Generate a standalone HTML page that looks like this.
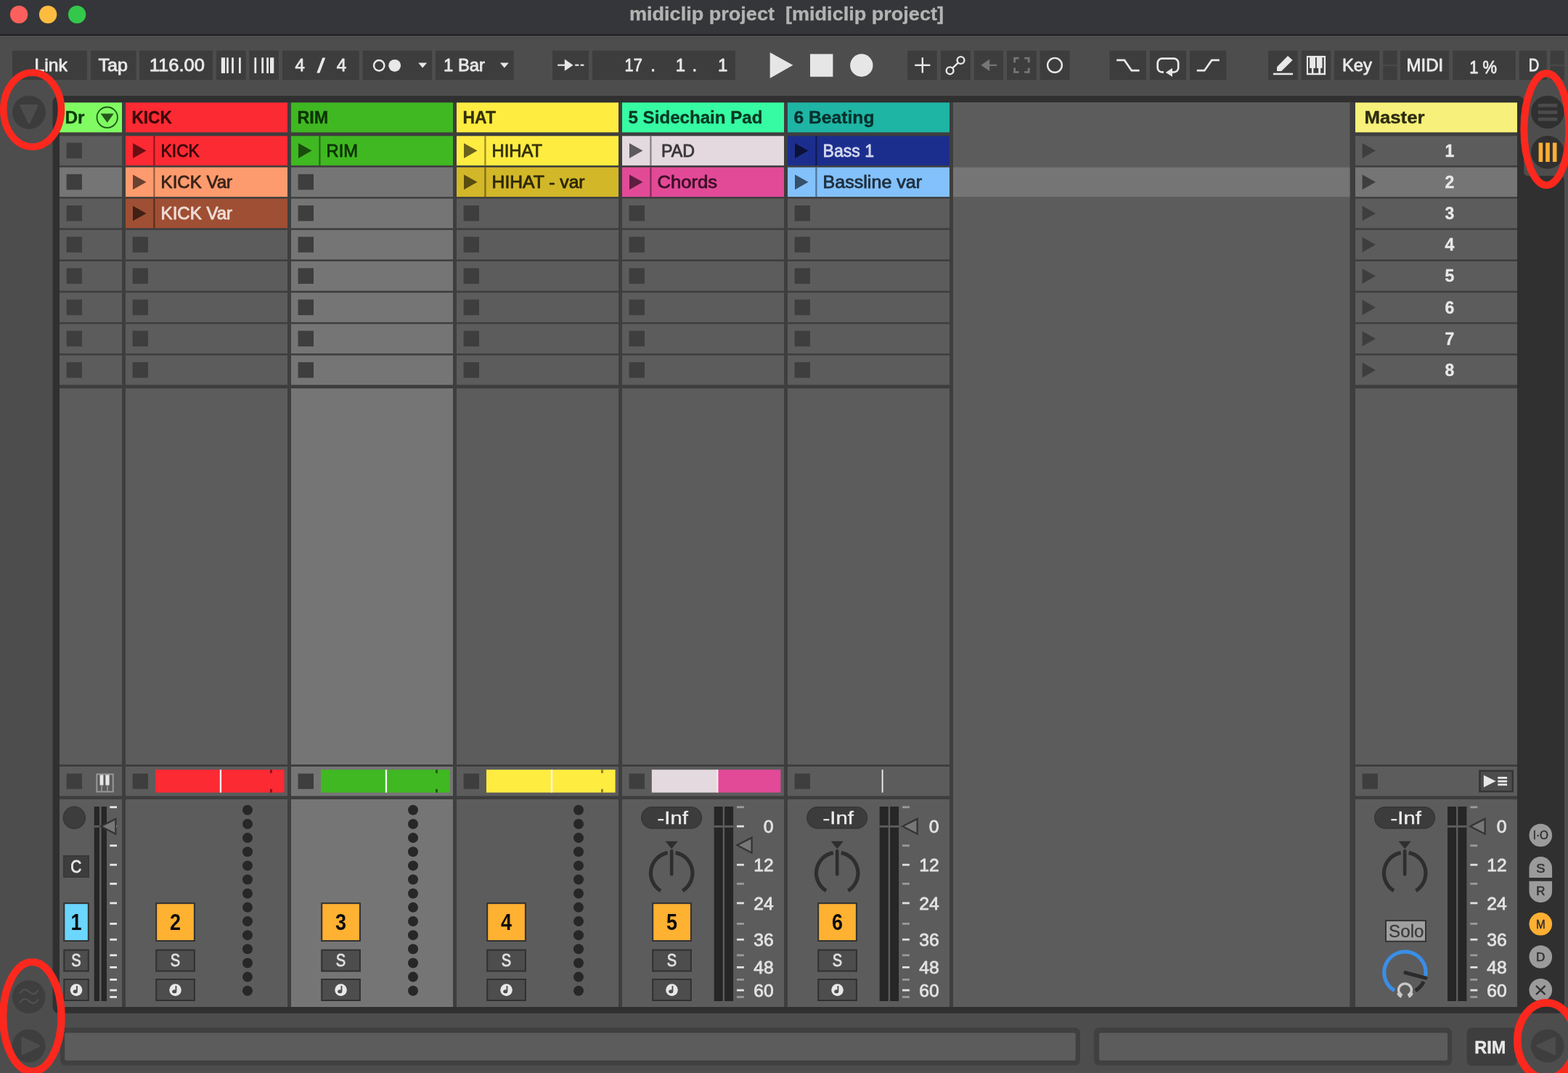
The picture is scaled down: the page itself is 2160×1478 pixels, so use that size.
<!DOCTYPE html>
<html lang="en"><head><meta charset="utf-8"><title>midiclip project  [midiclip project]</title>
<style>
html,body{margin:0;padding:0;background:#4d4d4d;}
body{width:2160px;height:1478px;overflow:hidden;}
svg{display:block;font-family:"Liberation Sans",sans-serif;will-change:transform;}
text{white-space:pre;}
</style></head><body>
<svg width="2160" height="1478" viewBox="0 0 2160 1478" shape-rendering="auto">
<rect width="2160" height="1478" fill="#4d4d4d"/>
<g id="titlebar">
<rect x="0" y="0" width="2160" height="47.8" fill="#353639"/>
<rect x="0" y="47.6" width="2160" height="1.4" fill="#141414"/>
<circle cx="26.1" cy="20" r="12.2" fill="#fd605c"/>
<circle cx="66.1" cy="20" r="12.2" fill="#fdbc40"/>
<circle cx="106.1" cy="20" r="12.2" fill="#33c74c"/>
<text x="1083.5" y="27.8" font-size="26" fill="#b3b3b3" font-weight="bold" text-anchor="middle" textLength="433" lengthAdjust="spacingAndGlyphs" stroke="#b3b3b3" stroke-width="0.35" stroke-linejoin="round">midiclip project  [midiclip project]</text>
</g>
<g id="toolbar">
<rect x="17" y="69.7" width="103" height="40.3" fill="#3d3d3d"/>
<rect x="125" y="69.7" width="62.5" height="40.3" fill="#3d3d3d"/>
<rect x="192" y="69.7" width="101" height="40.3" fill="#3d3d3d"/>
<rect x="298" y="69.7" width="40.8" height="40.3" fill="#3d3d3d"/>
<rect x="343.4" y="69.7" width="40.6" height="40.3" fill="#3d3d3d"/>
<rect x="389" y="69.7" width="105.7" height="40.3" fill="#3d3d3d"/>
<rect x="499.5" y="69.7" width="95.5" height="40.3" fill="#3d3d3d"/>
<rect x="600" y="69.7" width="107.7" height="40.3" fill="#3d3d3d"/>
<rect x="761" y="69.7" width="50" height="40.3" fill="#3d3d3d"/>
<rect x="816" y="69.7" width="197" height="40.3" fill="#3d3d3d"/>
<rect x="1250.2" y="69.7" width="40.5" height="40.3" fill="#3d3d3d"/>
<rect x="1296" y="69.7" width="40.9" height="40.3" fill="#3d3d3d"/>
<rect x="1341.8" y="69.7" width="40.2" height="40.3" fill="#3d3d3d"/>
<rect x="1387" y="69.7" width="40.8" height="40.3" fill="#3d3d3d"/>
<rect x="1432.7" y="69.7" width="40.9" height="40.3" fill="#3d3d3d"/>
<rect x="1528.5" y="69.7" width="50.5" height="40.3" fill="#3d3d3d"/>
<rect x="1584" y="69.7" width="50" height="40.3" fill="#3d3d3d"/>
<rect x="1638.9" y="69.7" width="50.4" height="40.3" fill="#3d3d3d"/>
<rect x="1747" y="69.7" width="40.7" height="40.3" fill="#3d3d3d"/>
<rect x="1792.7" y="69.7" width="40.3" height="40.3" fill="#3d3d3d"/>
<rect x="1838" y="69.7" width="62.2" height="40.3" fill="#3d3d3d"/>
<rect x="1929" y="69.7" width="67.2" height="40.3" fill="#3d3d3d"/>
<rect x="2001.2" y="69.7" width="86.6" height="40.3" fill="#3d3d3d"/>
<rect x="2092.7" y="69.7" width="38.1" height="40.3" fill="#3d3d3d"/>
<rect x="1905.2" y="69.7" width="19.3" height="19.5" fill="#3d3d3d"/>
<rect x="1905.2" y="90.8" width="19.3" height="19.2" fill="#3d3d3d"/>
<rect x="2135.7" y="69.7" width="19.3" height="19.5" fill="#3d3d3d"/>
<rect x="2135.7" y="90.8" width="19.3" height="19.2" fill="#3d3d3d"/>
<text x="47.5" y="97.9" font-size="24" fill="#e8e8e8" textLength="45.3" lengthAdjust="spacingAndGlyphs" stroke="#e8e8e8" stroke-width="0.8" stroke-linejoin="round">Link</text>
<text x="135.5" y="97.9" font-size="24" fill="#e8e8e8" textLength="40.5" lengthAdjust="spacingAndGlyphs" stroke="#e8e8e8" stroke-width="0.8" stroke-linejoin="round">Tap</text>
<text x="205.7" y="98.3" font-size="24" fill="#e8e8e8" textLength="76.2" lengthAdjust="spacingAndGlyphs" stroke="#e8e8e8" stroke-width="0.8" stroke-linejoin="round">116.00</text>
<rect x="304.8" y="79.3" width="5.3" height="21.6" fill="#e8e8e8"/>
<rect x="312.1" y="79.3" width="2.7" height="21.6" fill="#e8e8e8"/>
<rect x="319.1" y="79.3" width="2.8" height="21.6" fill="#e8e8e8"/>
<rect x="329" y="79.3" width="2.8" height="21.6" fill="#e8e8e8"/>
<rect x="350.4" y="79.3" width="2.8" height="21.6" fill="#e8e8e8"/>
<rect x="360.3" y="79.3" width="2.8" height="21.6" fill="#e8e8e8"/>
<rect x="367.2" y="79.3" width="2.8" height="21.6" fill="#e8e8e8"/>
<rect x="372" y="79.3" width="5.3" height="21.6" fill="#e8e8e8"/>
<text x="413.2" y="97.9" font-size="24" fill="#e8e8e8" text-anchor="middle" stroke="#e8e8e8" stroke-width="0.8" stroke-linejoin="round">4</text>
<text x="442.3" y="99.6" font-size="28" fill="#e8e8e8" text-anchor="middle" textLength="10.5" lengthAdjust="spacingAndGlyphs" stroke="#e8e8e8" stroke-width="0.8" stroke-linejoin="round">/</text>
<text x="470.4" y="97.9" font-size="24" fill="#e8e8e8" text-anchor="middle" stroke="#e8e8e8" stroke-width="0.8" stroke-linejoin="round">4</text>
<circle cx="522.2" cy="90.3" r="7.2" fill="none" stroke="#e8e8e8" stroke-width="2.5"/>
<circle cx="543.7" cy="90.3" r="8.4" fill="#e8e8e8"/>
<polygon points="576.2,86.5 588.1,86.5 582.15,93.6" fill="#e8e8e8"/>
<text x="611" y="97.9" font-size="24" fill="#e8e8e8" textLength="57" lengthAdjust="spacingAndGlyphs" stroke="#e8e8e8" stroke-width="0.8" stroke-linejoin="round">1 Bar</text>
<polygon points="688.9,86.5 700.8,86.5 694.85,93.6" fill="#e8e8e8"/>
<line x1="768.2" y1="89.7" x2="780" y2="89.7" stroke="#e8e8e8" stroke-width="2.2"/>
<polygon points="777.8,81.6 789.5,89.7 777.8,97.8" fill="#e8e8e8"/>
<line x1="792.2" y1="89.7" x2="797.3" y2="89.7" stroke="#e8e8e8" stroke-width="2.2"/>
<line x1="799.6" y1="89.7" x2="804.4" y2="89.7" stroke="#e8e8e8" stroke-width="2.2"/>
<text x="884.8" y="98.2" font-size="24" fill="#e8e8e8" text-anchor="end" textLength="24.2" lengthAdjust="spacingAndGlyphs" stroke="#e8e8e8" stroke-width="0.8" stroke-linejoin="round">17</text>
<text x="896.2" y="98.2" font-size="24" fill="#e8e8e8" stroke="#e8e8e8" stroke-width="0.8" stroke-linejoin="round">.</text>
<text x="944.2" y="98.2" font-size="24" fill="#e8e8e8" text-anchor="end" stroke="#e8e8e8" stroke-width="0.8" stroke-linejoin="round">1</text>
<text x="953.6" y="98.2" font-size="24" fill="#e8e8e8" stroke="#e8e8e8" stroke-width="0.8" stroke-linejoin="round">.</text>
<text x="1002.4" y="98.2" font-size="24" fill="#e8e8e8" text-anchor="end" stroke="#e8e8e8" stroke-width="0.8" stroke-linejoin="round">1</text>
<polygon points="1060.7,72.2 1092.4,89.8 1060.7,107.8" fill="#e6e6e6"/>
<rect x="1116" y="74.4" width="31.4" height="31.3" fill="#e6e6e6"/>
<circle cx="1186.8" cy="90" r="15.7" fill="#e6e6e6"/>
<line x1="1260.2" y1="89.8" x2="1281.4" y2="89.8" stroke="#e8e8e8" stroke-width="2.4"/>
<line x1="1270.8" y1="79.2" x2="1270.8" y2="100.4" stroke="#e8e8e8" stroke-width="2.4"/>
<line x1="1312.4" y1="93.6" x2="1319.7" y2="86.7" stroke="#e8e8e8" stroke-width="2.4"/>
<circle cx="1323.5" cy="83" r="4.9" fill="none" stroke="#e8e8e8" stroke-width="2.4"/>
<circle cx="1308.6" cy="97.3" r="4.9" fill="none" stroke="#e8e8e8" stroke-width="2.4"/>
<polygon points="1351.4,89.8 1363.2,81.6 1363.2,98" fill="#767676"/>
<line x1="1362" y1="89.8" x2="1373.2" y2="89.8" stroke="#767676" stroke-width="2.2"/>
<path d="M1403.6 80.2H1397.6V86.2" fill="none" stroke="#767676" stroke-width="2.8"/>
<path d="M1411.2 80.2H1417.2V86.2" fill="none" stroke="#767676" stroke-width="2.8"/>
<path d="M1403.6 99.4H1397.6V93.4" fill="none" stroke="#767676" stroke-width="2.8"/>
<path d="M1411.2 99.4H1417.2V93.4" fill="none" stroke="#767676" stroke-width="2.8"/>
<circle cx="1453" cy="89.8" r="9.9" fill="none" stroke="#e8e8e8" stroke-width="2.4"/>
<path d="M1538.2 82.9H1549L1558.8 97.2H1569.6" fill="none" stroke="#e8e8e8" stroke-width="2.7"/>
<path d="M1603 99.4H1600.7a6 6 0 0 1 -6 -6V86.7a6 6 0 0 1 6 -6H1617.2a6 6 0 0 1 6 6V93.4a6 6 0 0 1 -6 6H1614" fill="none" stroke="#e8e8e8" stroke-width="2.7"/>
<polygon points="1605.8,99.7 1615,93.7 1615,105.8" fill="#e8e8e8"/>
<path d="M1648.7 97.2H1659.2L1669.2 82.9H1679.8" fill="none" stroke="#e8e8e8" stroke-width="2.7"/>
<polygon points="1759,92.3 1774,76.9 1780.6,82.8 1765.2,98.1 1759,98.1" fill="#e8e8e8"/>
<rect x="1753.9" y="100.6" width="27.1" height="2.6" fill="#e8e8e8"/>
<rect x="1799.9" y="76.9" width="26.2" height="26.3" fill="#e8e8e8"/>
<rect x="1802" y="79.1" width="2.1" height="15.1" fill="#3d3d3d"/>
<rect x="1802" y="93.9" width="4.9" height="6.8" fill="#3d3d3d"/>
<rect x="1812" y="79.1" width="1.8" height="15.1" fill="#3d3d3d"/>
<rect x="1809.4" y="93.9" width="6.8" height="6.8" fill="#3d3d3d"/>
<rect x="1821.5" y="79.1" width="2.2" height="15.1" fill="#3d3d3d"/>
<rect x="1819.2" y="93.9" width="4.5" height="6.8" fill="#3d3d3d"/>
<text x="1848.9" y="97.9" font-size="24" fill="#e8e8e8" textLength="41" lengthAdjust="spacingAndGlyphs" stroke="#e8e8e8" stroke-width="0.8" stroke-linejoin="round">Key</text>
<text x="1937.6" y="97.9" font-size="24" fill="#e8e8e8" textLength="50.6" lengthAdjust="spacingAndGlyphs" stroke="#e8e8e8" stroke-width="0.8" stroke-linejoin="round">MIDI</text>
<text x="2024.2" y="100.8" font-size="24" fill="#e8e8e8" textLength="37.8" lengthAdjust="spacingAndGlyphs" stroke="#e8e8e8" stroke-width="0.8" stroke-linejoin="round">1 %</text>
<text x="2105.7" y="97.9" font-size="24" fill="#e8e8e8" textLength="14.5" lengthAdjust="spacingAndGlyphs" stroke="#e8e8e8" stroke-width="0.8" stroke-linejoin="round">D</text>
</g>
<g id="session">
<rect x="72.5" y="132" width="2082.5" height="1263.8" fill="#303030" rx="9"/>
<path d="M2099.3 120H2160V252H2155V248.3a6 6 0 0 0 -6 -6H2104.3a5 5 0 0 1 -5 -5Z" fill="#4d4d4d"/>
<rect x="2155" y="120" width="6" height="1300" fill="#4d4d4d"/>
<path d="M2091 132H2100V141A9 9 0 0 0 2091 132Z" fill="#4d4d4d"/>
<rect x="82" y="141" width="2008" height="1246" fill="#3e3e3e"/>
<rect x="82" y="141.3" width="86" height="41" fill="#80fc62"/>
<text x="89.5" y="170.3" font-size="23" fill="#0b3a0b" font-weight="bold" textLength="27" lengthAdjust="spacingAndGlyphs" stroke="#0b3a0b" stroke-width="0.35" stroke-linejoin="round">Dr</text>
<rect x="173" y="141.3" width="223" height="41" fill="#fc2a33"/>
<text x="181.5" y="170.3" font-size="23" fill="#3a0608" font-weight="bold" textLength="55.3" lengthAdjust="spacingAndGlyphs" stroke="#3a0608" stroke-width="0.35" stroke-linejoin="round">KICK</text>
<rect x="401" y="141.3" width="223" height="41" fill="#40b822"/>
<text x="409.5" y="170.3" font-size="23" fill="#0c3305" font-weight="bold" textLength="42.8" lengthAdjust="spacingAndGlyphs" stroke="#0c3305" stroke-width="0.35" stroke-linejoin="round">RIM</text>
<rect x="629" y="141.3" width="223" height="41" fill="#feec41"/>
<text x="637.5" y="170.3" font-size="23" fill="#33300a" font-weight="bold" textLength="45.5" lengthAdjust="spacingAndGlyphs" stroke="#33300a" stroke-width="0.35" stroke-linejoin="round">HAT</text>
<rect x="857" y="141.3" width="223" height="41" fill="#36fba3"/>
<text x="865.5" y="170.3" font-size="23" fill="#083823" font-weight="bold" textLength="185" lengthAdjust="spacingAndGlyphs" stroke="#083823" stroke-width="0.35" stroke-linejoin="round">5 Sidechain Pad</text>
<rect x="1085" y="141.3" width="223" height="41" fill="#1eb5a5"/>
<text x="1093.5" y="170.3" font-size="23" fill="#05302b" font-weight="bold" textLength="111" lengthAdjust="spacingAndGlyphs" stroke="#05302b" stroke-width="0.35" stroke-linejoin="round">6 Beating</text>
<circle cx="147.7" cy="161.7" r="14.2" fill="none" stroke="#1f5a16" stroke-width="1.8"/>
<polygon points="138.6,156.6 156.8,156.6 147.7,169" fill="#27591d"/>
<rect x="1313" y="141" width="546.5" height="1246" fill="#5c5c5c"/>
<rect x="1313" y="230.5" width="546.5" height="40.6" fill="#757575"/>
<rect x="82" y="187.3" width="86" height="40.6" fill="#5c5c5c"/>
<rect x="91.6" y="196.7" width="21.4" height="21.5" fill="#3e3e3e"/>
<rect x="82" y="230.5" width="86" height="40.6" fill="#757575"/>
<rect x="91.6" y="239.9" width="21.4" height="21.5" fill="#3e3e3e"/>
<rect x="82" y="273.6" width="86" height="40.6" fill="#5c5c5c"/>
<rect x="91.6" y="283" width="21.4" height="21.5" fill="#3e3e3e"/>
<rect x="82" y="316.8" width="86" height="40.6" fill="#5c5c5c"/>
<rect x="91.6" y="326.2" width="21.4" height="21.5" fill="#3e3e3e"/>
<rect x="82" y="360" width="86" height="40.6" fill="#5c5c5c"/>
<rect x="91.6" y="369.4" width="21.4" height="21.5" fill="#3e3e3e"/>
<rect x="82" y="403.2" width="86" height="40.6" fill="#5c5c5c"/>
<rect x="91.6" y="412.6" width="21.4" height="21.5" fill="#3e3e3e"/>
<rect x="82" y="446.3" width="86" height="40.6" fill="#5c5c5c"/>
<rect x="91.6" y="455.7" width="21.4" height="21.5" fill="#3e3e3e"/>
<rect x="82" y="489.5" width="86" height="40.6" fill="#5c5c5c"/>
<rect x="91.6" y="498.9" width="21.4" height="21.5" fill="#3e3e3e"/>
<rect x="82" y="535" width="86" height="518" fill="#5c5c5c"/>
<rect x="82" y="1056" width="86" height="40.4" fill="#5c5c5c"/>
<rect x="82" y="1101" width="86" height="286" fill="#5c5c5c"/>
<rect x="91.6" y="1065.6" width="21.4" height="21.2" fill="#3e3e3e"/>
<rect x="173" y="187.3" width="223" height="40.6" fill="#fc2a33"/>
<rect x="211.3" y="187.3" width="2.2" height="40.6" fill="#690f14" opacity="0.7"/>
<polygon points="183,197.2 201.5,207.6 183,218" fill="#690f14"/>
<text x="221.6" y="215.7" font-size="23" fill="#3a0608" textLength="53.2" lengthAdjust="spacingAndGlyphs" stroke="#3a0608" stroke-width="0.8" stroke-linejoin="round">KICK</text>
<rect x="173" y="230.5" width="223" height="40.6" fill="#fe9b6e"/>
<rect x="211.3" y="230.5" width="2.2" height="40.6" fill="#6b4130" opacity="0.7"/>
<polygon points="183,240.4 201.5,250.8 183,261.2" fill="#6b4130"/>
<text x="221.6" y="258.9" font-size="23" fill="#3b2419" textLength="98.5" lengthAdjust="spacingAndGlyphs" stroke="#3b2419" stroke-width="0.8" stroke-linejoin="round">KICK Var</text>
<rect x="173" y="273.6" width="223" height="40.6" fill="#9f4f33"/>
<rect x="211.3" y="273.6" width="2.2" height="40.6" fill="#401f14" opacity="0.7"/>
<polygon points="183,283.5 201.5,293.9 183,304.3" fill="#401f14"/>
<text x="221.6" y="302" font-size="23" fill="#eedcd6" textLength="98.5" lengthAdjust="spacingAndGlyphs" stroke="#eedcd6" stroke-width="0.8" stroke-linejoin="round">KICK Var</text>
<rect x="173" y="316.8" width="223" height="40.6" fill="#5c5c5c"/>
<rect x="182.6" y="326.2" width="21.4" height="21.5" fill="#3e3e3e"/>
<rect x="173" y="360" width="223" height="40.6" fill="#5c5c5c"/>
<rect x="182.6" y="369.4" width="21.4" height="21.5" fill="#3e3e3e"/>
<rect x="173" y="403.2" width="223" height="40.6" fill="#5c5c5c"/>
<rect x="182.6" y="412.6" width="21.4" height="21.5" fill="#3e3e3e"/>
<rect x="173" y="446.3" width="223" height="40.6" fill="#5c5c5c"/>
<rect x="182.6" y="455.7" width="21.4" height="21.5" fill="#3e3e3e"/>
<rect x="173" y="489.5" width="223" height="40.6" fill="#5c5c5c"/>
<rect x="182.6" y="498.9" width="21.4" height="21.5" fill="#3e3e3e"/>
<rect x="173" y="535" width="223" height="518" fill="#5c5c5c"/>
<rect x="173" y="1056" width="223" height="40.4" fill="#5c5c5c"/>
<rect x="173" y="1101" width="223" height="286" fill="#5c5c5c"/>
<rect x="182.6" y="1065.6" width="21.4" height="21.2" fill="#3e3e3e"/>
<rect x="401" y="187.3" width="223" height="40.6" fill="#40b822"/>
<rect x="439.3" y="187.3" width="2.2" height="40.6" fill="#1a4d0d" opacity="0.7"/>
<polygon points="411,197.2 429.5,207.6 411,218" fill="#1a4d0d"/>
<text x="449.6" y="215.7" font-size="23" fill="#0c3305" textLength="43.5" lengthAdjust="spacingAndGlyphs" stroke="#0c3305" stroke-width="0.8" stroke-linejoin="round">RIM</text>
<rect x="401" y="230.5" width="223" height="40.6" fill="#757575"/>
<rect x="410.6" y="239.9" width="21.4" height="21.5" fill="#3e3e3e"/>
<rect x="401" y="273.6" width="223" height="40.6" fill="#757575"/>
<rect x="410.6" y="283" width="21.4" height="21.5" fill="#3e3e3e"/>
<rect x="401" y="316.8" width="223" height="40.6" fill="#757575"/>
<rect x="410.6" y="326.2" width="21.4" height="21.5" fill="#3e3e3e"/>
<rect x="401" y="360" width="223" height="40.6" fill="#757575"/>
<rect x="410.6" y="369.4" width="21.4" height="21.5" fill="#3e3e3e"/>
<rect x="401" y="403.2" width="223" height="40.6" fill="#757575"/>
<rect x="410.6" y="412.6" width="21.4" height="21.5" fill="#3e3e3e"/>
<rect x="401" y="446.3" width="223" height="40.6" fill="#757575"/>
<rect x="410.6" y="455.7" width="21.4" height="21.5" fill="#3e3e3e"/>
<rect x="401" y="489.5" width="223" height="40.6" fill="#757575"/>
<rect x="410.6" y="498.9" width="21.4" height="21.5" fill="#3e3e3e"/>
<rect x="401" y="535" width="223" height="518" fill="#757575"/>
<rect x="401" y="1056" width="223" height="40.4" fill="#757575"/>
<rect x="401" y="1101" width="223" height="286" fill="#757575"/>
<rect x="410.6" y="1065.6" width="21.4" height="21.2" fill="#3e3e3e"/>
<rect x="629" y="187.3" width="223" height="40.6" fill="#feec41"/>
<rect x="667.3" y="187.3" width="2.2" height="40.6" fill="#6a621b" opacity="0.7"/>
<polygon points="639,197.2 657.5,207.6 639,218" fill="#6a621b"/>
<text x="677.6" y="215.7" font-size="23" fill="#33300a" textLength="69.5" lengthAdjust="spacingAndGlyphs" stroke="#33300a" stroke-width="0.8" stroke-linejoin="round">HIHAT</text>
<rect x="629" y="230.5" width="223" height="40.6" fill="#d2b729"/>
<rect x="667.3" y="230.5" width="2.2" height="40.6" fill="#584c10" opacity="0.7"/>
<polygon points="639,240.4 657.5,250.8 639,261.2" fill="#584c10"/>
<text x="677.6" y="258.9" font-size="23" fill="#2e2808" textLength="128" lengthAdjust="spacingAndGlyphs" stroke="#2e2808" stroke-width="0.8" stroke-linejoin="round">HIHAT - var</text>
<rect x="629" y="273.6" width="223" height="40.6" fill="#5c5c5c"/>
<rect x="638.6" y="283" width="21.4" height="21.5" fill="#3e3e3e"/>
<rect x="629" y="316.8" width="223" height="40.6" fill="#5c5c5c"/>
<rect x="638.6" y="326.2" width="21.4" height="21.5" fill="#3e3e3e"/>
<rect x="629" y="360" width="223" height="40.6" fill="#5c5c5c"/>
<rect x="638.6" y="369.4" width="21.4" height="21.5" fill="#3e3e3e"/>
<rect x="629" y="403.2" width="223" height="40.6" fill="#5c5c5c"/>
<rect x="638.6" y="412.6" width="21.4" height="21.5" fill="#3e3e3e"/>
<rect x="629" y="446.3" width="223" height="40.6" fill="#5c5c5c"/>
<rect x="638.6" y="455.7" width="21.4" height="21.5" fill="#3e3e3e"/>
<rect x="629" y="489.5" width="223" height="40.6" fill="#5c5c5c"/>
<rect x="638.6" y="498.9" width="21.4" height="21.5" fill="#3e3e3e"/>
<rect x="629" y="535" width="223" height="518" fill="#5c5c5c"/>
<rect x="629" y="1056" width="223" height="40.4" fill="#5c5c5c"/>
<rect x="629" y="1101" width="223" height="286" fill="#5c5c5c"/>
<rect x="638.6" y="1065.6" width="21.4" height="21.2" fill="#3e3e3e"/>
<rect x="857" y="187.3" width="223" height="40.6" fill="#e3d9de"/>
<rect x="895.3" y="187.3" width="2.2" height="40.6" fill="#5e5a5c" opacity="0.7"/>
<polygon points="867,197.2 885.5,207.6 867,218" fill="#5e5a5c"/>
<text x="911" y="215.7" font-size="23" fill="#3a3739" textLength="46" lengthAdjust="spacingAndGlyphs" stroke="#3a3739" stroke-width="0.8" stroke-linejoin="round">PAD</text>
<rect x="857" y="230.5" width="223" height="40.6" fill="#e24a98"/>
<rect x="895.3" y="230.5" width="2.2" height="40.6" fill="#5e1e3f" opacity="0.7"/>
<polygon points="867,240.4 885.5,250.8 867,261.2" fill="#5e1e3f"/>
<text x="905.6" y="258.9" font-size="23" fill="#3d0f27" textLength="82.5" lengthAdjust="spacingAndGlyphs" stroke="#3d0f27" stroke-width="0.8" stroke-linejoin="round">Chords</text>
<rect x="857" y="273.6" width="223" height="40.6" fill="#5c5c5c"/>
<rect x="866.6" y="283" width="21.4" height="21.5" fill="#3e3e3e"/>
<rect x="857" y="316.8" width="223" height="40.6" fill="#5c5c5c"/>
<rect x="866.6" y="326.2" width="21.4" height="21.5" fill="#3e3e3e"/>
<rect x="857" y="360" width="223" height="40.6" fill="#5c5c5c"/>
<rect x="866.6" y="369.4" width="21.4" height="21.5" fill="#3e3e3e"/>
<rect x="857" y="403.2" width="223" height="40.6" fill="#5c5c5c"/>
<rect x="866.6" y="412.6" width="21.4" height="21.5" fill="#3e3e3e"/>
<rect x="857" y="446.3" width="223" height="40.6" fill="#5c5c5c"/>
<rect x="866.6" y="455.7" width="21.4" height="21.5" fill="#3e3e3e"/>
<rect x="857" y="489.5" width="223" height="40.6" fill="#5c5c5c"/>
<rect x="866.6" y="498.9" width="21.4" height="21.5" fill="#3e3e3e"/>
<rect x="857" y="535" width="223" height="518" fill="#5c5c5c"/>
<rect x="857" y="1056" width="223" height="40.4" fill="#5c5c5c"/>
<rect x="857" y="1101" width="223" height="286" fill="#5c5c5c"/>
<rect x="866.6" y="1065.6" width="21.4" height="21.2" fill="#3e3e3e"/>
<rect x="1085" y="187.3" width="223" height="40.6" fill="#1c2e8d"/>
<rect x="1123.3" y="187.3" width="2.2" height="40.6" fill="#0b1238" opacity="0.7"/>
<polygon points="1095,197.2 1113.5,207.6 1095,218" fill="#0b1238"/>
<text x="1133.6" y="215.7" font-size="23" fill="#d4d8ee" textLength="70.5" lengthAdjust="spacingAndGlyphs" stroke="#d4d8ee" stroke-width="0.8" stroke-linejoin="round">Bass 1</text>
<rect x="1085" y="230.5" width="223" height="40.6" fill="#83c1fc"/>
<rect x="1123.3" y="230.5" width="2.2" height="40.6" fill="#36506a" opacity="0.7"/>
<polygon points="1095,240.4 1113.5,250.8 1095,261.2" fill="#36506a"/>
<text x="1133.6" y="258.9" font-size="23" fill="#20303f" textLength="136.5" lengthAdjust="spacingAndGlyphs" stroke="#20303f" stroke-width="0.8" stroke-linejoin="round">Bassline var</text>
<rect x="1085" y="273.6" width="223" height="40.6" fill="#5c5c5c"/>
<rect x="1094.6" y="283" width="21.4" height="21.5" fill="#3e3e3e"/>
<rect x="1085" y="316.8" width="223" height="40.6" fill="#5c5c5c"/>
<rect x="1094.6" y="326.2" width="21.4" height="21.5" fill="#3e3e3e"/>
<rect x="1085" y="360" width="223" height="40.6" fill="#5c5c5c"/>
<rect x="1094.6" y="369.4" width="21.4" height="21.5" fill="#3e3e3e"/>
<rect x="1085" y="403.2" width="223" height="40.6" fill="#5c5c5c"/>
<rect x="1094.6" y="412.6" width="21.4" height="21.5" fill="#3e3e3e"/>
<rect x="1085" y="446.3" width="223" height="40.6" fill="#5c5c5c"/>
<rect x="1094.6" y="455.7" width="21.4" height="21.5" fill="#3e3e3e"/>
<rect x="1085" y="489.5" width="223" height="40.6" fill="#5c5c5c"/>
<rect x="1094.6" y="498.9" width="21.4" height="21.5" fill="#3e3e3e"/>
<rect x="1085" y="535" width="223" height="518" fill="#5c5c5c"/>
<rect x="1085" y="1056" width="223" height="40.4" fill="#5c5c5c"/>
<rect x="1085" y="1101" width="223" height="286" fill="#5c5c5c"/>
<rect x="1094.6" y="1065.6" width="21.4" height="21.2" fill="#3e3e3e"/>
<rect x="1867" y="141.3" width="223" height="41" fill="#f7f07a"/>
<text x="1879.5" y="170.3" font-size="23" fill="#2d2c10" font-weight="bold" textLength="83" lengthAdjust="spacingAndGlyphs" stroke="#2d2c10" stroke-width="0.35" stroke-linejoin="round">Master</text>
<rect x="1867" y="187.3" width="223" height="40.6" fill="#5c5c5c"/>
<polygon points="1876.6,197.2 1895,207.6 1876.6,218" fill="#3e3e3e"/>
<text x="1997" y="215.6" font-size="23" fill="#e8e8e8" font-weight="bold" text-anchor="middle" stroke="#e8e8e8" stroke-width="0.35" stroke-linejoin="round">1</text>
<rect x="1867" y="230.5" width="223" height="40.6" fill="#757575"/>
<polygon points="1876.6,240.4 1895,250.8 1876.6,261.2" fill="#3e3e3e"/>
<text x="1997" y="258.8" font-size="23" fill="#e8e8e8" font-weight="bold" text-anchor="middle" stroke="#e8e8e8" stroke-width="0.35" stroke-linejoin="round">2</text>
<rect x="1867" y="273.6" width="223" height="40.6" fill="#5c5c5c"/>
<polygon points="1876.6,283.5 1895,293.9 1876.6,304.3" fill="#3e3e3e"/>
<text x="1997" y="301.9" font-size="23" fill="#e8e8e8" font-weight="bold" text-anchor="middle" stroke="#e8e8e8" stroke-width="0.35" stroke-linejoin="round">3</text>
<rect x="1867" y="316.8" width="223" height="40.6" fill="#5c5c5c"/>
<polygon points="1876.6,326.7 1895,337.1 1876.6,347.5" fill="#3e3e3e"/>
<text x="1997" y="345.1" font-size="23" fill="#e8e8e8" font-weight="bold" text-anchor="middle" stroke="#e8e8e8" stroke-width="0.35" stroke-linejoin="round">4</text>
<rect x="1867" y="360" width="223" height="40.6" fill="#5c5c5c"/>
<polygon points="1876.6,369.9 1895,380.3 1876.6,390.7" fill="#3e3e3e"/>
<text x="1997" y="388.3" font-size="23" fill="#e8e8e8" font-weight="bold" text-anchor="middle" stroke="#e8e8e8" stroke-width="0.35" stroke-linejoin="round">5</text>
<rect x="1867" y="403.2" width="223" height="40.6" fill="#5c5c5c"/>
<polygon points="1876.6,413.1 1895,423.5 1876.6,433.9" fill="#3e3e3e"/>
<text x="1997" y="431.5" font-size="23" fill="#e8e8e8" font-weight="bold" text-anchor="middle" stroke="#e8e8e8" stroke-width="0.35" stroke-linejoin="round">6</text>
<rect x="1867" y="446.3" width="223" height="40.6" fill="#5c5c5c"/>
<polygon points="1876.6,456.2 1895,466.6 1876.6,477" fill="#3e3e3e"/>
<text x="1997" y="474.6" font-size="23" fill="#e8e8e8" font-weight="bold" text-anchor="middle" stroke="#e8e8e8" stroke-width="0.35" stroke-linejoin="round">7</text>
<rect x="1867" y="489.5" width="223" height="40.6" fill="#5c5c5c"/>
<polygon points="1876.6,499.4 1895,509.8 1876.6,520.2" fill="#3e3e3e"/>
<text x="1997" y="517.8" font-size="23" fill="#e8e8e8" font-weight="bold" text-anchor="middle" stroke="#e8e8e8" stroke-width="0.35" stroke-linejoin="round">8</text>
<rect x="1867" y="535" width="223" height="518" fill="#5c5c5c"/>
<rect x="1867" y="1056" width="223" height="40.4" fill="#5c5c5c"/>
<rect x="1867" y="1101" width="223" height="286" fill="#5c5c5c"/>
<rect x="1876.7" y="1065.6" width="21.3" height="21.2" fill="#3e3e3e"/>
</g>
<g id="status-row">
<rect x="214" y="1060.2" width="177.6" height="31.5" fill="#fc2a33"/>
<rect x="302.8" y="1060.2" width="2.3" height="31.5" fill="#f4f4f4"/>
<rect x="372" y="1060.2" width="2.9" height="4.8" fill="#8c1219"/>
<rect x="372" y="1086.9" width="2.9" height="4.8" fill="#8c1219"/>
<rect x="442" y="1060.2" width="177.6" height="31.5" fill="#40b822"/>
<rect x="530.8" y="1060.2" width="2.3" height="31.5" fill="#f4f4f4"/>
<rect x="600" y="1060.2" width="2.9" height="4.8" fill="#1d5a0e"/>
<rect x="600" y="1086.9" width="2.9" height="4.8" fill="#1d5a0e"/>
<rect x="670" y="1060.2" width="177.6" height="31.5" fill="#feec41"/>
<rect x="758.8" y="1060.2" width="2.3" height="31.5" fill="#f4f4f4"/>
<rect x="828" y="1060.2" width="2.9" height="4.8" fill="#8f8420"/>
<rect x="828" y="1086.9" width="2.9" height="4.8" fill="#8f8420"/>
<rect x="897.8" y="1060.2" width="91" height="31.5" fill="#e3d9de"/>
<rect x="988.8" y="1060.2" width="86.6" height="31.5" fill="#e24a98"/>
<rect x="987.6" y="1060.2" width="1.8" height="31.5" fill="#f4f4f4"/>
<rect x="1214.7" y="1060.2" width="1.8" height="31.5" fill="#f0f0f0"/>
<rect x="132.4" y="1065.5" width="24.3" height="26" fill="#9a9a9a"/>
<rect x="134.3" y="1067.4" width="20.5" height="22.2" fill="#5c5c5c"/>
<rect x="137.6" y="1067.4" width="4.8" height="14.2" fill="#e8e8e8"/>
<rect x="145.4" y="1067.4" width="5.2" height="14.2" fill="#e8e8e8"/>
<rect x="139.3" y="1081.6" width="1.6" height="8" fill="#9a9a9a"/>
<rect x="147.2" y="1081.6" width="1.6" height="8" fill="#9a9a9a"/>
<rect x="2037.2" y="1060.6" width="47.8" height="30.8" fill="#343434"/>
<rect x="2039.6" y="1063" width="43" height="26" fill="#4d4d4d"/>
<polygon points="2043.9,1067.8 2060.6,1076.1 2043.9,1084.4" fill="#e8e8e8"/>
<rect x="2063.3" y="1070" width="12.8" height="2.8" fill="#e8e8e8"/>
<rect x="2063.3" y="1074.8" width="12.8" height="2.8" fill="#e8e8e8"/>
<rect x="2063.3" y="1079.4" width="12.8" height="2.8" fill="#e8e8e8"/>
</g>
<g id="mixer">
<circle cx="102.3" cy="1126.4" r="15" fill="#3d3d3d" stroke="#383838" stroke-width="1.6"/>
<rect x="86.9" y="1178.1" width="36.1" height="30.8" fill="#383838"/>
<rect x="88.7" y="1179.9" width="32.5" height="27.2" fill="#3d3d3d"/>
<text x="104.8" y="1202.2" font-size="24" fill="#e8e8e8" text-anchor="middle" textLength="15" lengthAdjust="spacingAndGlyphs" stroke="#e8e8e8" stroke-width="0.8" stroke-linejoin="round">C</text>
<rect x="87.3" y="1243.2" width="35.5" height="53.8" fill="#313131"/>
<rect x="89.3" y="1245.2" width="31.5" height="49.8" fill="#6bd6fe"/>
<text x="105.05" y="1281.2" font-size="32" fill="#0c0c0c" font-weight="bold" text-anchor="middle" textLength="15" lengthAdjust="spacingAndGlyphs" stroke="none">1</text>
<rect x="87.3" y="1307.6" width="35.5" height="31" fill="#313131"/>
<rect x="89.3" y="1309.6" width="31.5" height="27" fill="#4d4d4d"/>
<text x="105.05" y="1331.4" font-size="23" fill="#e0e0e0" text-anchor="middle" textLength="13.4" lengthAdjust="spacingAndGlyphs" stroke="#e0e0e0" stroke-width="0.8" stroke-linejoin="round">S</text>
<rect x="87.3" y="1348" width="35.5" height="31" fill="#313131"/>
<rect x="89.3" y="1350" width="31.5" height="27" fill="#4d4d4d"/>
<circle cx="105.05" cy="1363.6" r="8.3" fill="#e8e8e8"/>
<path d="M105.95 1358V1364.8" fill="none" stroke="#4d4d4d" stroke-width="1.9"/>
<ellipse cx="103.75" cy="1365.8" rx="3.1" ry="2.5" fill="#4d4d4d"/>
<rect x="129.7" y="1111" width="7.3" height="268" fill="#262626"/>
<rect x="139.6" y="1111" width="7.4" height="268" fill="#262626"/>
<rect x="129.7" y="1136.9" width="17.3" height="3" fill="#5c5c5c"/>
<rect x="151.3" y="1110.4" width="9.7" height="2.8" fill="#e8e8e8"/>
<rect x="151.3" y="1136.8" width="9.7" height="2.8" fill="#e8e8e8"/>
<rect x="151.3" y="1163.4" width="9.7" height="2.8" fill="#e8e8e8"/>
<rect x="151.3" y="1189.8" width="9.7" height="2.8" fill="#e8e8e8"/>
<rect x="151.3" y="1215.9" width="9.7" height="2.8" fill="#e8e8e8"/>
<rect x="151.3" y="1242.6" width="9.7" height="2.8" fill="#e8e8e8"/>
<rect x="151.3" y="1271" width="9.7" height="2.8" fill="#e8e8e8"/>
<rect x="151.3" y="1292.8" width="9.7" height="2.8" fill="#e8e8e8"/>
<rect x="151.3" y="1314.4" width="9.7" height="2.8" fill="#e8e8e8"/>
<rect x="151.3" y="1331" width="9.7" height="2.8" fill="#e8e8e8"/>
<rect x="151.3" y="1348" width="9.7" height="2.8" fill="#e8e8e8"/>
<rect x="151.3" y="1362.6" width="9.7" height="2.8" fill="#e8e8e8"/>
<rect x="151.3" y="1371.9" width="9.7" height="2.8" fill="#e8e8e8"/>
<polygon points="139,1138.3 159.4,1128 159.4,1148.8" fill="#777777" stroke="#333333" stroke-width="2.2" stroke-linejoin="miter"/>
<rect x="214.2" y="1243.2" width="54.7" height="53.8" fill="#313131"/>
<rect x="216.2" y="1245.2" width="50.7" height="49.8" fill="#ffb132"/>
<text x="241.55" y="1281.2" font-size="32" fill="#0c0c0c" font-weight="bold" text-anchor="middle" textLength="15" lengthAdjust="spacingAndGlyphs" stroke="none">2</text>
<rect x="214.2" y="1307.6" width="54.7" height="31" fill="#313131"/>
<rect x="216.2" y="1309.6" width="50.7" height="27" fill="#4d4d4d"/>
<text x="241.55" y="1331.4" font-size="23" fill="#e0e0e0" text-anchor="middle" textLength="13.4" lengthAdjust="spacingAndGlyphs" stroke="#e0e0e0" stroke-width="0.8" stroke-linejoin="round">S</text>
<rect x="214.2" y="1348" width="54.7" height="31" fill="#313131"/>
<rect x="216.2" y="1350" width="50.7" height="27" fill="#4d4d4d"/>
<circle cx="241.55" cy="1363.6" r="8.3" fill="#e8e8e8"/>
<path d="M242.45 1358V1364.8" fill="none" stroke="#4d4d4d" stroke-width="1.9"/>
<ellipse cx="240.25" cy="1365.8" rx="3.1" ry="2.5" fill="#4d4d4d"/>
<circle cx="341" cy="1115.8" r="7" fill="#272727"/>
<circle cx="341" cy="1134.95" r="7" fill="#272727"/>
<circle cx="341" cy="1154.1" r="7" fill="#272727"/>
<circle cx="341" cy="1173.25" r="7" fill="#272727"/>
<circle cx="341" cy="1192.4" r="7" fill="#272727"/>
<circle cx="341" cy="1211.55" r="7" fill="#272727"/>
<circle cx="341" cy="1230.7" r="7" fill="#272727"/>
<circle cx="341" cy="1249.85" r="7" fill="#272727"/>
<circle cx="341" cy="1269" r="7" fill="#272727"/>
<circle cx="341" cy="1288.15" r="7" fill="#272727"/>
<circle cx="341" cy="1307.3" r="7" fill="#272727"/>
<circle cx="341" cy="1326.45" r="7" fill="#272727"/>
<circle cx="341" cy="1345.6" r="7" fill="#272727"/>
<circle cx="341" cy="1364.75" r="7" fill="#272727"/>
<rect x="442.2" y="1243.2" width="54.7" height="53.8" fill="#313131"/>
<rect x="444.2" y="1245.2" width="50.7" height="49.8" fill="#ffb132"/>
<text x="469.55" y="1281.2" font-size="32" fill="#0c0c0c" font-weight="bold" text-anchor="middle" textLength="15" lengthAdjust="spacingAndGlyphs" stroke="none">3</text>
<rect x="442.2" y="1307.6" width="54.7" height="31" fill="#313131"/>
<rect x="444.2" y="1309.6" width="50.7" height="27" fill="#4d4d4d"/>
<text x="469.55" y="1331.4" font-size="23" fill="#e0e0e0" text-anchor="middle" textLength="13.4" lengthAdjust="spacingAndGlyphs" stroke="#e0e0e0" stroke-width="0.8" stroke-linejoin="round">S</text>
<rect x="442.2" y="1348" width="54.7" height="31" fill="#313131"/>
<rect x="444.2" y="1350" width="50.7" height="27" fill="#4d4d4d"/>
<circle cx="469.55" cy="1363.6" r="8.3" fill="#e8e8e8"/>
<path d="M470.45 1358V1364.8" fill="none" stroke="#4d4d4d" stroke-width="1.9"/>
<ellipse cx="468.25" cy="1365.8" rx="3.1" ry="2.5" fill="#4d4d4d"/>
<circle cx="569" cy="1115.8" r="7" fill="#272727"/>
<circle cx="569" cy="1134.95" r="7" fill="#272727"/>
<circle cx="569" cy="1154.1" r="7" fill="#272727"/>
<circle cx="569" cy="1173.25" r="7" fill="#272727"/>
<circle cx="569" cy="1192.4" r="7" fill="#272727"/>
<circle cx="569" cy="1211.55" r="7" fill="#272727"/>
<circle cx="569" cy="1230.7" r="7" fill="#272727"/>
<circle cx="569" cy="1249.85" r="7" fill="#272727"/>
<circle cx="569" cy="1269" r="7" fill="#272727"/>
<circle cx="569" cy="1288.15" r="7" fill="#272727"/>
<circle cx="569" cy="1307.3" r="7" fill="#272727"/>
<circle cx="569" cy="1326.45" r="7" fill="#272727"/>
<circle cx="569" cy="1345.6" r="7" fill="#272727"/>
<circle cx="569" cy="1364.75" r="7" fill="#272727"/>
<rect x="670.2" y="1243.2" width="54.7" height="53.8" fill="#313131"/>
<rect x="672.2" y="1245.2" width="50.7" height="49.8" fill="#ffb132"/>
<text x="697.55" y="1281.2" font-size="32" fill="#0c0c0c" font-weight="bold" text-anchor="middle" textLength="15" lengthAdjust="spacingAndGlyphs" stroke="none">4</text>
<rect x="670.2" y="1307.6" width="54.7" height="31" fill="#313131"/>
<rect x="672.2" y="1309.6" width="50.7" height="27" fill="#4d4d4d"/>
<text x="697.55" y="1331.4" font-size="23" fill="#e0e0e0" text-anchor="middle" textLength="13.4" lengthAdjust="spacingAndGlyphs" stroke="#e0e0e0" stroke-width="0.8" stroke-linejoin="round">S</text>
<rect x="670.2" y="1348" width="54.7" height="31" fill="#313131"/>
<rect x="672.2" y="1350" width="50.7" height="27" fill="#4d4d4d"/>
<circle cx="697.55" cy="1363.6" r="8.3" fill="#e8e8e8"/>
<path d="M698.45 1358V1364.8" fill="none" stroke="#4d4d4d" stroke-width="1.9"/>
<ellipse cx="696.25" cy="1365.8" rx="3.1" ry="2.5" fill="#4d4d4d"/>
<circle cx="797" cy="1115.8" r="7" fill="#272727"/>
<circle cx="797" cy="1134.95" r="7" fill="#272727"/>
<circle cx="797" cy="1154.1" r="7" fill="#272727"/>
<circle cx="797" cy="1173.25" r="7" fill="#272727"/>
<circle cx="797" cy="1192.4" r="7" fill="#272727"/>
<circle cx="797" cy="1211.55" r="7" fill="#272727"/>
<circle cx="797" cy="1230.7" r="7" fill="#272727"/>
<circle cx="797" cy="1249.85" r="7" fill="#272727"/>
<circle cx="797" cy="1269" r="7" fill="#272727"/>
<circle cx="797" cy="1288.15" r="7" fill="#272727"/>
<circle cx="797" cy="1307.3" r="7" fill="#272727"/>
<circle cx="797" cy="1326.45" r="7" fill="#272727"/>
<circle cx="797" cy="1345.6" r="7" fill="#272727"/>
<circle cx="797" cy="1364.75" r="7" fill="#272727"/>
<rect x="883.7" y="1111.8" width="82.8" height="29.2" fill="#3c3c3c" rx="14.6" stroke="#363636" stroke-width="1.4"/>
<text x="926.7" y="1134.8" font-size="23.5" fill="#ececec" text-anchor="middle" textLength="42.2" lengthAdjust="spacingAndGlyphs" stroke="#ececec" stroke-width="0.4">-Inf</text>
<polygon points="916.6,1158.8 933.8,1158.8 925.2,1169.2" fill="#2e2e2e"/>
<path d="M910.0 1227.0A28.6 28.6 0 0 1 919.7 1174.6" fill="none" stroke="#2e2e2e" stroke-width="5.2"/>
<path d="M930.7 1174.6A28.6 28.6 0 0 1 940.4 1227.0" fill="none" stroke="#2e2e2e" stroke-width="5.2"/>
<line x1="925.2" y1="1172.4" x2="925.2" y2="1204.2" stroke="#2e2e2e" stroke-width="4.6" stroke-linecap="round"/>
<rect x="898.2" y="1243.2" width="54.7" height="53.8" fill="#313131"/>
<rect x="900.2" y="1245.2" width="50.7" height="49.8" fill="#ffb132"/>
<text x="925.55" y="1281.2" font-size="32" fill="#0c0c0c" font-weight="bold" text-anchor="middle" textLength="15" lengthAdjust="spacingAndGlyphs" stroke="none">5</text>
<rect x="898.2" y="1307.6" width="54.7" height="31" fill="#313131"/>
<rect x="900.2" y="1309.6" width="50.7" height="27" fill="#4d4d4d"/>
<text x="925.55" y="1331.4" font-size="23" fill="#e0e0e0" text-anchor="middle" textLength="13.4" lengthAdjust="spacingAndGlyphs" stroke="#e0e0e0" stroke-width="0.8" stroke-linejoin="round">S</text>
<rect x="898.2" y="1348" width="54.7" height="31" fill="#313131"/>
<rect x="900.2" y="1350" width="50.7" height="27" fill="#4d4d4d"/>
<circle cx="925.55" cy="1363.6" r="8.3" fill="#e8e8e8"/>
<path d="M926.45 1358V1364.8" fill="none" stroke="#4d4d4d" stroke-width="1.9"/>
<ellipse cx="924.25" cy="1365.8" rx="3.1" ry="2.5" fill="#4d4d4d"/>
<rect x="983.7" y="1111" width="12" height="268" fill="#262626"/>
<rect x="998.1" y="1111" width="12" height="268" fill="#262626"/>
<rect x="983.7" y="1136.9" width="26.5" height="3" fill="#5c5c5c"/>
<rect x="1015" y="1110.4" width="9.9" height="2.8" fill="#9b9b9b"/>
<rect x="1015" y="1136.8" width="9.9" height="2.8" fill="#e0e0e0"/>
<rect x="1015" y="1163.4" width="9.9" height="2.8" fill="#9b9b9b"/>
<rect x="1015" y="1189.8" width="9.9" height="2.8" fill="#e0e0e0"/>
<rect x="1015" y="1215.9" width="9.9" height="2.8" fill="#9b9b9b"/>
<rect x="1015" y="1242.6" width="9.9" height="2.8" fill="#e0e0e0"/>
<rect x="1015" y="1271" width="9.9" height="2.8" fill="#9b9b9b"/>
<rect x="1015" y="1292.8" width="9.9" height="2.8" fill="#e0e0e0"/>
<rect x="1015" y="1314.4" width="9.9" height="2.8" fill="#9b9b9b"/>
<rect x="1015" y="1331" width="9.9" height="2.8" fill="#e0e0e0"/>
<rect x="1015" y="1348" width="9.9" height="2.8" fill="#9b9b9b"/>
<rect x="1015" y="1362.6" width="9.9" height="2.8" fill="#e0e0e0"/>
<rect x="1015" y="1371.9" width="9.9" height="2.8" fill="#9b9b9b"/>
<text x="1065.6" y="1146.7" font-size="24" fill="#e2e2e2" text-anchor="end" textLength="13.8" lengthAdjust="spacingAndGlyphs" stroke="#e2e2e2" stroke-width="0.8" stroke-linejoin="round">0</text>
<text x="1065.6" y="1199.7" font-size="24" fill="#e2e2e2" text-anchor="end" textLength="27.4" lengthAdjust="spacingAndGlyphs" stroke="#e2e2e2" stroke-width="0.8" stroke-linejoin="round">12</text>
<text x="1065.6" y="1252.5" font-size="24" fill="#e2e2e2" text-anchor="end" textLength="27.4" lengthAdjust="spacingAndGlyphs" stroke="#e2e2e2" stroke-width="0.8" stroke-linejoin="round">24</text>
<text x="1065.6" y="1302.7" font-size="24" fill="#e2e2e2" text-anchor="end" textLength="27.4" lengthAdjust="spacingAndGlyphs" stroke="#e2e2e2" stroke-width="0.8" stroke-linejoin="round">36</text>
<text x="1065.6" y="1340.9" font-size="24" fill="#e2e2e2" text-anchor="end" textLength="27.4" lengthAdjust="spacingAndGlyphs" stroke="#e2e2e2" stroke-width="0.8" stroke-linejoin="round">48</text>
<text x="1065.6" y="1372.5" font-size="24" fill="#e2e2e2" text-anchor="end" textLength="27.4" lengthAdjust="spacingAndGlyphs" stroke="#e2e2e2" stroke-width="0.8" stroke-linejoin="round">60</text>
<polygon points="1015.2,1164.2 1035.6,1153.9 1035.6,1174.7" fill="#777777" stroke="#333333" stroke-width="2.2" stroke-linejoin="miter"/>
<rect x="1111.7" y="1111.8" width="82.8" height="29.2" fill="#3c3c3c" rx="14.6" stroke="#363636" stroke-width="1.4"/>
<text x="1154.7" y="1134.8" font-size="23.5" fill="#ececec" text-anchor="middle" textLength="42.2" lengthAdjust="spacingAndGlyphs" stroke="#ececec" stroke-width="0.4">-Inf</text>
<polygon points="1144.6,1158.8 1161.8,1158.8 1153.2,1169.2" fill="#2e2e2e"/>
<path d="M1138.0 1227.0A28.6 28.6 0 0 1 1147.7 1174.6" fill="none" stroke="#2e2e2e" stroke-width="5.2"/>
<path d="M1158.7 1174.6A28.6 28.6 0 0 1 1168.4 1227.0" fill="none" stroke="#2e2e2e" stroke-width="5.2"/>
<line x1="1153.2" y1="1172.4" x2="1153.2" y2="1204.2" stroke="#2e2e2e" stroke-width="4.6" stroke-linecap="round"/>
<rect x="1126.2" y="1243.2" width="54.7" height="53.8" fill="#313131"/>
<rect x="1128.2" y="1245.2" width="50.7" height="49.8" fill="#ffb132"/>
<text x="1153.55" y="1281.2" font-size="32" fill="#0c0c0c" font-weight="bold" text-anchor="middle" textLength="15" lengthAdjust="spacingAndGlyphs" stroke="none">6</text>
<rect x="1126.2" y="1307.6" width="54.7" height="31" fill="#313131"/>
<rect x="1128.2" y="1309.6" width="50.7" height="27" fill="#4d4d4d"/>
<text x="1153.55" y="1331.4" font-size="23" fill="#e0e0e0" text-anchor="middle" textLength="13.4" lengthAdjust="spacingAndGlyphs" stroke="#e0e0e0" stroke-width="0.8" stroke-linejoin="round">S</text>
<rect x="1126.2" y="1348" width="54.7" height="31" fill="#313131"/>
<rect x="1128.2" y="1350" width="50.7" height="27" fill="#4d4d4d"/>
<circle cx="1153.55" cy="1363.6" r="8.3" fill="#e8e8e8"/>
<path d="M1154.45 1358V1364.8" fill="none" stroke="#4d4d4d" stroke-width="1.9"/>
<ellipse cx="1152.25" cy="1365.8" rx="3.1" ry="2.5" fill="#4d4d4d"/>
<rect x="1211.7" y="1111" width="12" height="268" fill="#262626"/>
<rect x="1226.1" y="1111" width="12" height="268" fill="#262626"/>
<rect x="1211.7" y="1136.9" width="26.5" height="3" fill="#5c5c5c"/>
<rect x="1243" y="1110.4" width="9.9" height="2.8" fill="#9b9b9b"/>
<rect x="1243" y="1136.8" width="9.9" height="2.8" fill="#e0e0e0"/>
<rect x="1243" y="1163.4" width="9.9" height="2.8" fill="#9b9b9b"/>
<rect x="1243" y="1189.8" width="9.9" height="2.8" fill="#e0e0e0"/>
<rect x="1243" y="1215.9" width="9.9" height="2.8" fill="#9b9b9b"/>
<rect x="1243" y="1242.6" width="9.9" height="2.8" fill="#e0e0e0"/>
<rect x="1243" y="1271" width="9.9" height="2.8" fill="#9b9b9b"/>
<rect x="1243" y="1292.8" width="9.9" height="2.8" fill="#e0e0e0"/>
<rect x="1243" y="1314.4" width="9.9" height="2.8" fill="#9b9b9b"/>
<rect x="1243" y="1331" width="9.9" height="2.8" fill="#e0e0e0"/>
<rect x="1243" y="1348" width="9.9" height="2.8" fill="#9b9b9b"/>
<rect x="1243" y="1362.6" width="9.9" height="2.8" fill="#e0e0e0"/>
<rect x="1243" y="1371.9" width="9.9" height="2.8" fill="#9b9b9b"/>
<text x="1293.6" y="1146.7" font-size="24" fill="#e2e2e2" text-anchor="end" textLength="13.8" lengthAdjust="spacingAndGlyphs" stroke="#e2e2e2" stroke-width="0.8" stroke-linejoin="round">0</text>
<text x="1293.6" y="1199.7" font-size="24" fill="#e2e2e2" text-anchor="end" textLength="27.4" lengthAdjust="spacingAndGlyphs" stroke="#e2e2e2" stroke-width="0.8" stroke-linejoin="round">12</text>
<text x="1293.6" y="1252.5" font-size="24" fill="#e2e2e2" text-anchor="end" textLength="27.4" lengthAdjust="spacingAndGlyphs" stroke="#e2e2e2" stroke-width="0.8" stroke-linejoin="round">24</text>
<text x="1293.6" y="1302.7" font-size="24" fill="#e2e2e2" text-anchor="end" textLength="27.4" lengthAdjust="spacingAndGlyphs" stroke="#e2e2e2" stroke-width="0.8" stroke-linejoin="round">36</text>
<text x="1293.6" y="1340.9" font-size="24" fill="#e2e2e2" text-anchor="end" textLength="27.4" lengthAdjust="spacingAndGlyphs" stroke="#e2e2e2" stroke-width="0.8" stroke-linejoin="round">48</text>
<text x="1293.6" y="1372.5" font-size="24" fill="#e2e2e2" text-anchor="end" textLength="27.4" lengthAdjust="spacingAndGlyphs" stroke="#e2e2e2" stroke-width="0.8" stroke-linejoin="round">60</text>
<polygon points="1243.2,1138.2 1263.6,1127.9 1263.6,1148.7" fill="#777777" stroke="#333333" stroke-width="2.2" stroke-linejoin="miter"/>
<rect x="1893.7" y="1111.8" width="82.8" height="29.2" fill="#3c3c3c" rx="14.6" stroke="#363636" stroke-width="1.4"/>
<text x="1936.7" y="1134.8" font-size="23.5" fill="#ececec" text-anchor="middle" textLength="42.2" lengthAdjust="spacingAndGlyphs" stroke="#ececec" stroke-width="0.4">-Inf</text>
<polygon points="1926.6,1158.8 1943.8,1158.8 1935.2,1169.2" fill="#2e2e2e"/>
<path d="M1920.0 1227.0A28.6 28.6 0 0 1 1929.7 1174.6" fill="none" stroke="#2e2e2e" stroke-width="5.2"/>
<path d="M1940.7 1174.6A28.6 28.6 0 0 1 1950.4 1227.0" fill="none" stroke="#2e2e2e" stroke-width="5.2"/>
<line x1="1935.2" y1="1172.4" x2="1935.2" y2="1204.2" stroke="#2e2e2e" stroke-width="4.6" stroke-linecap="round"/>
<rect x="1994" y="1111" width="12" height="268" fill="#262626"/>
<rect x="2008.4" y="1111" width="12" height="268" fill="#262626"/>
<rect x="1994" y="1136.9" width="26.6" height="3" fill="#5c5c5c"/>
<rect x="2025.4" y="1110.4" width="9.9" height="2.8" fill="#9b9b9b"/>
<rect x="2025.4" y="1136.8" width="9.9" height="2.8" fill="#e0e0e0"/>
<rect x="2025.4" y="1163.4" width="9.9" height="2.8" fill="#9b9b9b"/>
<rect x="2025.4" y="1189.8" width="9.9" height="2.8" fill="#e0e0e0"/>
<rect x="2025.4" y="1215.9" width="9.9" height="2.8" fill="#9b9b9b"/>
<rect x="2025.4" y="1242.6" width="9.9" height="2.8" fill="#e0e0e0"/>
<rect x="2025.4" y="1271" width="9.9" height="2.8" fill="#9b9b9b"/>
<rect x="2025.4" y="1292.8" width="9.9" height="2.8" fill="#e0e0e0"/>
<rect x="2025.4" y="1314.4" width="9.9" height="2.8" fill="#9b9b9b"/>
<rect x="2025.4" y="1331" width="9.9" height="2.8" fill="#e0e0e0"/>
<rect x="2025.4" y="1348" width="9.9" height="2.8" fill="#9b9b9b"/>
<rect x="2025.4" y="1362.6" width="9.9" height="2.8" fill="#e0e0e0"/>
<rect x="2025.4" y="1371.9" width="9.9" height="2.8" fill="#9b9b9b"/>
<text x="2075.6" y="1146.7" font-size="24" fill="#e2e2e2" text-anchor="end" textLength="13.8" lengthAdjust="spacingAndGlyphs" stroke="#e2e2e2" stroke-width="0.8" stroke-linejoin="round">0</text>
<text x="2075.6" y="1199.7" font-size="24" fill="#e2e2e2" text-anchor="end" textLength="27.4" lengthAdjust="spacingAndGlyphs" stroke="#e2e2e2" stroke-width="0.8" stroke-linejoin="round">12</text>
<text x="2075.6" y="1252.5" font-size="24" fill="#e2e2e2" text-anchor="end" textLength="27.4" lengthAdjust="spacingAndGlyphs" stroke="#e2e2e2" stroke-width="0.8" stroke-linejoin="round">24</text>
<text x="2075.6" y="1302.7" font-size="24" fill="#e2e2e2" text-anchor="end" textLength="27.4" lengthAdjust="spacingAndGlyphs" stroke="#e2e2e2" stroke-width="0.8" stroke-linejoin="round">36</text>
<text x="2075.6" y="1340.9" font-size="24" fill="#e2e2e2" text-anchor="end" textLength="27.4" lengthAdjust="spacingAndGlyphs" stroke="#e2e2e2" stroke-width="0.8" stroke-linejoin="round">48</text>
<text x="2075.6" y="1372.5" font-size="24" fill="#e2e2e2" text-anchor="end" textLength="27.4" lengthAdjust="spacingAndGlyphs" stroke="#e2e2e2" stroke-width="0.8" stroke-linejoin="round">60</text>
<polygon points="2025.2,1138.2 2045.6,1127.9 2045.6,1148.7" fill="#777777" stroke="#333333" stroke-width="2.2" stroke-linejoin="miter"/>
<rect x="1908" y="1267.1" width="57" height="30.6" fill="#343434"/>
<rect x="1910" y="1269.1" width="53" height="26.6" fill="#a0a0a0"/>
<text x="1913.1" y="1290.7" font-size="23" fill="#3a3a3a" textLength="48.4" lengthAdjust="spacingAndGlyphs" stroke="#3a3a3a" stroke-width="0.3">Solo</text>
<path d="M1921.1 1364.5A28.7 28.7 0 1 1 1963.6 1345.1" fill="none" stroke="#3a8ee6" stroke-width="5.1"/>
<path d="M1961.2 1352.2A28.7 28.7 0 0 1 1949.8 1364.5" fill="none" stroke="#2b2b2b" stroke-width="5.1"/>
<line x1="1935.88" y1="1339.73" x2="1963.92" y2="1347.14" stroke="#2b2b2b" stroke-width="5" stroke-linecap="round"/>
<path d="M1930.8 1371.3A8.9 8.9 0 1 1 1940.2 1371.3" fill="none" stroke="#c9c9c9" stroke-width="3.4"/>
<path d="M1926.6 1367.4A9.6 9.6 0 0 0 1931.0 1372.3" fill="none" stroke="#c9c9c9" stroke-width="5.6"/>
<path d="M1944.4 1367.4A9.6 9.6 0 0 1 1940.0 1372.3" fill="none" stroke="#c9c9c9" stroke-width="5.6"/>
</g>
<g id="side">
<circle cx="2131.8" cy="154.5" r="22.8" fill="#303030"/>
<rect x="2118.8" y="142.8" width="26.4" height="4.75" fill="#4b4b4b"/>
<rect x="2118.8" y="152.3" width="26.4" height="4.75" fill="#4b4b4b"/>
<rect x="2118.8" y="161.9" width="26.4" height="4.75" fill="#4b4b4b"/>
<circle cx="2131.8" cy="209.8" r="22.8" fill="#303030"/>
<rect x="2119.6" y="196.6" width="5.6" height="26.4" fill="#ffae32"/>
<rect x="2129.2" y="196.6" width="5.6" height="26.4" fill="#ffae32"/>
<rect x="2138.9" y="196.6" width="5.6" height="26.4" fill="#ffae32"/>
<circle cx="2122.3" cy="1150.5" r="15.8" fill="#9b9b9b"/>
<text x="2122.3" y="1156.1" font-size="16.4" fill="#333333" text-anchor="middle" textLength="21.3" lengthAdjust="spacingAndGlyphs" stroke="#333333" stroke-width="0.55">I·O</text>
<path d="M2106.5 1209.1V1195.9a15.8 15.8 0 0 1 31.6 0V1209.1Z" fill="#9b9b9b"/>
<text x="2122.3" y="1202" font-size="16.4" fill="#333333" text-anchor="middle" textLength="12.2" lengthAdjust="spacingAndGlyphs" stroke="#333333" stroke-width="0.55">S</text>
<path d="M2106.5 1213.8V1227.4a15.8 15.8 0 0 0 31.6 0V1213.8Z" fill="#9b9b9b"/>
<text x="2122.3" y="1233" font-size="16.4" fill="#333333" text-anchor="middle" textLength="12.2" lengthAdjust="spacingAndGlyphs" stroke="#333333" stroke-width="0.55">R</text>
<circle cx="2122.3" cy="1272.8" r="15.8" fill="#ffb033"/>
<text x="2122.3" y="1278.7" font-size="16.4" fill="#333333" text-anchor="middle" textLength="12.7" lengthAdjust="spacingAndGlyphs" stroke="#333333" stroke-width="0.55">M</text>
<circle cx="2122.3" cy="1318" r="15.8" fill="#9b9b9b"/>
<text x="2122.3" y="1323.9" font-size="16.4" fill="#333333" text-anchor="middle" textLength="12.4" lengthAdjust="spacingAndGlyphs" stroke="#333333" stroke-width="0.55">D</text>
<circle cx="2122.3" cy="1363.7" r="15.8" fill="#9b9b9b"/>
<path d="M2116 1357.8L2128.6 1369.8M2128.6 1357.8L2116 1369.8" fill="none" stroke="#333" stroke-width="2.3"/>
</g>
<g id="statusbar">
<rect x="83" y="1415.6" width="1405" height="52" fill="#404040" rx="7"/>
<rect x="89.2" y="1422.8" width="1392.4" height="38" fill="#5c5c5c" rx="2"/>
<rect x="1507" y="1415.6" width="493.2" height="52" fill="#404040" rx="7"/>
<rect x="1514.2" y="1422.8" width="479.8" height="38" fill="#5c5c5c" rx="2"/>
<rect x="2020.6" y="1415.6" width="69" height="52.4" fill="#3e3e3e" rx="7"/>
<text x="2031.2" y="1451.3" font-size="23.5" fill="#e8e8e8" font-weight="bold" textLength="43.2" lengthAdjust="spacingAndGlyphs" stroke="#e8e8e8" stroke-width="0.35" stroke-linejoin="round">RIM</text>
<circle cx="40" cy="154.8" r="23" fill="#3c3c3c"/>
<path d="M29.2 145.6H50.8L40 168.6Z" fill="#4d4d4d" stroke="#4d4d4d" stroke-width="3.4" stroke-linejoin="round"/>
<circle cx="39.7" cy="1373.2" r="22.9" fill="#3e3e3e"/>
<path d="M27.2 1368.4c4.4 -6.6 8.4 -6.6 12.8 -2.4s8.4 4.4 12.8 -2.4" fill="none" stroke="#505050" stroke-width="2.4"/>
<path d="M27.2 1381.2c4.4 -6.6 8.4 -6.6 12.8 -2.4s8.4 4.4 12.8 -2.4" fill="none" stroke="#505050" stroke-width="2.4"/>
<circle cx="39.7" cy="1440.6" r="22.9" fill="#3e3e3e"/>
<path d="M31 1429.8V1451.8L53.6 1440.6Z" fill="#4d4d4d" stroke="#4d4d4d" stroke-width="3" stroke-linejoin="round"/>
<circle cx="2131.7" cy="1440.7" r="22.9" fill="#3e3e3e"/>
<path d="M2141.4 1429.8V1451.8L2117.6 1440.7Z" fill="#4d4d4d" stroke="#4d4d4d" stroke-width="3" stroke-linejoin="round"/>
</g>
<g id="annotations" fill="none" stroke="#fc281e">
<ellipse cx="44.6" cy="151.1" rx="39.9" ry="51.1" stroke-width="9.6"/>
<ellipse cx="2130.4" cy="178" rx="31" ry="77" stroke-width="10"/>
<ellipse cx="44.4" cy="1400.5" rx="40.2" ry="75.3" stroke-width="10.3"/>
<ellipse cx="2130.3" cy="1433.4" rx="40" ry="52.2" stroke-width="10.6"/>
</g>
</svg>
</body></html>
